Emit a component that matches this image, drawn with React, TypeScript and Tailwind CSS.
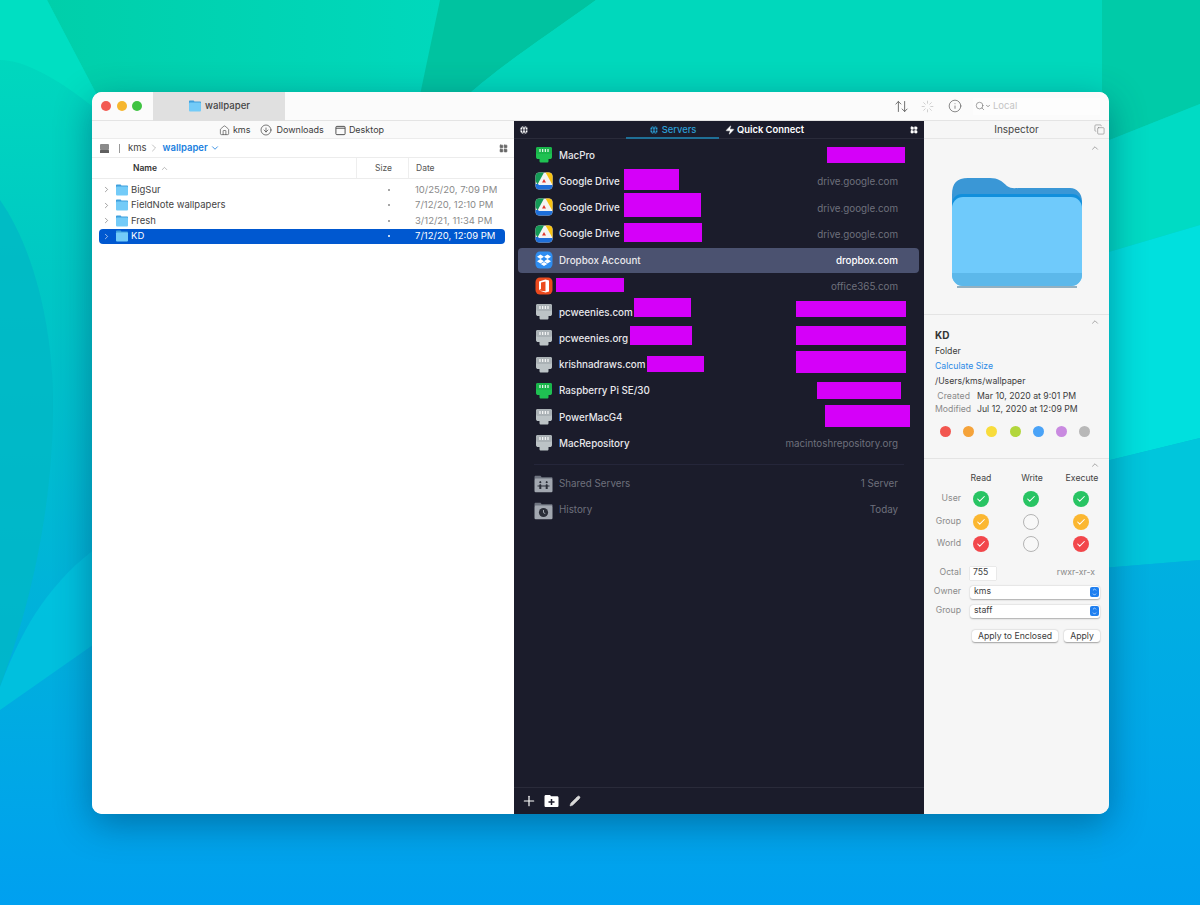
import React from 'react';
import {
  ArrowUpDown,
  ChevronDown,
  ChevronRight,
  ChevronUp,
  Check,
  CircleArrowDown,
  Copy,
  Globe,
  Home,
  Info,
  LayoutGrid,
  Loader,
  Pencil,
  Plus,
  Search,
  Zap,
} from 'lucide-react';

type Server = {
  name: string;
  host?: string;
  icon: 'green' | 'gray' | 'drive' | 'dropbox' | 'office';
  bars?: string[];
  active?: boolean;
};

const servers: Server[] = [
  { name: 'MacPro', icon: 'green', bars: ['left-[313px] top-[5px] h-[16px] w-[78px]'] },
  { name: 'Google Drive', host: 'drive.google.com', icon: 'drive', bars: ['left-[110px] top-[1px] h-[21px] w-[55px]'] },
  { name: 'Google Drive', host: 'drive.google.com', icon: 'drive', bars: ['left-[110px] top-[-1px] h-[24px] w-[77px]'] },
  { name: 'Google Drive', host: 'drive.google.com', icon: 'drive', bars: ['left-[110px] top-[2px] h-[19px] w-[78px]'] },
  { name: 'Dropbox Account', host: 'dropbox.com', icon: 'dropbox', active: true },
  { name: '', host: 'office365.com', icon: 'office', bars: ['left-[42px] top-[5px] h-[14px] w-[68px]'] },
  { name: 'pcweenies.com', icon: 'gray', bars: ['left-[120px] top-[-1px] h-[19px] w-[57px]', 'left-[282px] top-[2px] h-[16px] w-[110px]'] },
  { name: 'pcweenies.org', icon: 'gray', bars: ['left-[116px] top-[1px] h-[19px] w-[62px]', 'left-[282px] top-[1px] h-[19px] w-[110px]'] },
  { name: 'krishnadraws.com', icon: 'gray', bars: ['left-[133px] top-[4px] h-[16px] w-[57px]', 'left-[282px] top-[-1px] h-[22px] w-[110px]'] },
  { name: 'Raspberry Pi SE/30', icon: 'green', bars: ['left-[303px] top-[4px] h-[17px] w-[84px]'] },
  { name: 'PowerMacG4', icon: 'gray', bars: ['left-[311px] top-[1px] h-[22px] w-[85px]'] },
  { name: 'MacRepository', host: 'macintoshrepository.org', icon: 'gray' },
];

const files = [
  { name: 'BigSur', date: '10/25/20, 7:09 PM' },
  { name: 'FieldNote wallpapers', date: '7/12/20, 12:10 PM' },
  { name: 'Fresh', date: '3/12/21, 11:34 PM' },
  { name: 'KD', date: '7/12/20, 12:09 PM', selected: true },
];

const labelDots = ['bg-[#f2564f]', 'bg-[#f5a33a]', 'bg-[#f8dc3c]', 'bg-[#b2d63c]', 'bg-[#4aa3f7]', 'bg-[#c98ae0]', 'bg-[#b8b8b8]'];

const perms = [
  { who: 'User', cells: ['bg-[#28c463]', 'bg-[#28c463]', 'bg-[#28c463]'] },
  { who: 'Group', cells: ['bg-[#fbb731]', '', 'bg-[#fbb731]'] },
  { who: 'World', cells: ['bg-[#f2474b]', '', 'bg-[#f2474b]'] },
];

function Wallpaper() {
  return (
    <svg className="absolute inset-0" width="1200" height="905" viewBox="0 0 1200 905">
      <defs>
        <linearGradient id="wall" x1="0" y1="0" x2="0" y2="1">
          <stop offset="0" stopColor="#00dcbc" />
          <stop offset="0.3" stopColor="#00c8c4" />
          <stop offset="0.7" stopColor="#00b0dc" />
          <stop offset="1" stopColor="#00a0f0" />
        </linearGradient>
        <linearGradient id="wedge" x1="0" y1="0" x2="1" y2="0">
          <stop offset="0" stopColor="#00cfaa" />
          <stop offset="1" stopColor="#00d8bc" />
        </linearGradient>
        <linearGradient id="band" x1="0" y1="0" x2="0" y2="1">
          <stop offset="0" stopColor="#00b0e0" />
          <stop offset="1" stopColor="#00a0f0" />
        </linearGradient>
      </defs>
      <rect width="1200" height="905" fill="url(#wall)" />
      <path d="M47 0H440L420 95H97Z" fill="url(#wedge)" />
      <path d="M440 0H596C540 40 495 70 468 95H420Z" fill="#00c3a0" />
      <path d="M596 0H1102V95H468C495 70 540 40 596 0Z" fill="#00d8bc" />
      <path d="M1102 0H1200V104L1102 143Z" fill="#00cba8" />
      <path d="M1102 143L1200 104V225L1102 254Z" fill="#00dbc4" />
      <path d="M1102 254L1200 225V438L1102 462Z" fill="#00e0de" />
      <path d="M1102 462L1200 438V560L1102 568Z" fill="#00c6dc" />
      <path d="M1102 568L1200 560V905H1102Z" fill="url(#band)" />
      <path d="M0 0H47L97 95V110C60 80 25 60 0 60Z" fill="#00dfc2" />
      <path d="M0 200C35 250 53 330 53 404C53 520 25 620 0 687Z" fill="#00b8c6" opacity="0.8" />
      <path d="M0 687C25 620 53 580 100 545V640L0 710Z" fill="#00c2de" opacity="0.9" />
    </svg>
  );
}

function Folder({ className }: { className: string }) {
  return (
    <svg className={className} viewBox="0 0 14 12">
      <path d="M1 1.6C1 .9 1.4.5 2 .5h3.2c.5 0 .8.6 1.4 1H12c.6 0 1 .4 1 1V4H1Z" fill="#3f9fdc" />
      <rect x="1" y="2.6" width="12" height="9" rx="1" fill="#73cbf8" />
    </svg>
  );
}

function BigFolder() {
  return (
    <svg className="mt-[36px] ml-[28px] h-[114px] w-[130px]" viewBox="0 0 130 114">
      <path d="M5 112H125" stroke="#7a9fb4" strokeWidth="2" opacity="0.8" />
      <path d="M0 20C0 8 5 3 16 3H38C46 3 50 6 55 11C59 14 62 13 70 13H118C125 13 130 19 130 26V60H0Z" fill="#3a97d6" />
      <path d="M0 30C0 23 4 19 10 19H120C126 19 130 23 130 30V38H0Z" fill="#118fdc" />
      <rect x="0" y="22" width="130" height="89" rx="11" fill="#6fcafb" />
      <path d="M0 98H130V100A11 11 0 0 1 119 111H11A11 11 0 0 1 0 100Z" fill="#5cb8ea" />
    </svg>
  );
}

function ServerIcon({ kind }: { kind: Server['icon'] }) {
  if (kind === 'green' || kind === 'gray') {
    const body = kind === 'green' ? '#1fc152' : '#bcc3c6';
    const top = kind === 'green' ? '#19b54a' : '#aab1b5';
    return (
      <svg className="h-[18px] w-[18px]" viewBox="0 0 18 18">
        <path d="M1 3C1 1.5 2 1 3 1H15C16 1 17 1.5 17 3V11C17 12.5 16 13 15 13H13.5V15C13.5 16 13 16.5 12 16.5H6C5 16.5 4.5 16 4.5 15V13H3C2 13 1 12.5 1 11Z" fill={body} />
        <rect x="1" y="1" width="16" height="7" rx="2" fill={top} />
        <path d="M5 3V6M7.7 3V6M10.3 3V6M13 3V6" stroke="#fff" strokeWidth="1.1" />
      </svg>
    );
  }
  if (kind === 'drive') {
    return (
      <svg className="h-[18px] w-[18px]" viewBox="0 0 18 18">
        <rect x="0.5" y="0.5" width="17" height="17" rx="4" fill="#f4f4f4" />
        <path d="M4.5.5H9L2.5 12.5L.5 9V4.5C.5 2 2 .5 4.5.5Z" fill="#159a56" />
        <path d="M10.5.5H13.5C16 .5 17.5 2 17.5 4.5V13L12 3Z" fill="#f9c312" />
        <path d="M.5 12H4L3 13H17.5C17.5 16 16 17.5 13.5 17.5H4.5C2 17.5.5 16 .5 13Z" fill="#1e6fd9" />
        <path d="M9 7L11 10.5H7Z" fill="#e1362c" />
      </svg>
    );
  }
  if (kind === 'dropbox') {
    return (
      <svg className="h-[18px] w-[18px]" viewBox="0 0 18 18">
        <rect x="0.5" y="0.5" width="17" height="17" rx="4.5" fill="#2f8df0" />
        <path d="M5.5 3.5L9 5.8 5.5 8 2 5.8ZM12.5 3.5L16 5.8 12.5 8 9 5.8ZM5.5 8L9 10.2 5.5 12.5 2 10.2ZM12.5 8L16 10.2 12.5 12.5 9 10.2ZM5.7 13L9 11 12.3 13 9 15Z" fill="#fff" />
      </svg>
    );
  }
  return (
    <svg className="h-[18px] w-[18px]" viewBox="0 0 18 18">
      <rect x="0.5" y="0.5" width="17" height="17" rx="4.5" fill="#ec4a1e" />
      <path d="M4 4.5L10.5 2.5L14 3.5V14.5L10.5 15.5L4 13.5L10.5 14.2V4.5L6 5.5V12L4 13Z" fill="#fff" />
    </svg>
  );
}

function SharedIcon({ clock }: { clock?: boolean }) {
  return (
    <svg className="h-[18px] w-[19px]" viewBox="0 0 19 18">
      <path d="M.5 2C.5 1.2 1 .8 1.7.8H6C6.7.8 7 1.4 7.6 2.2H17.5C18.2 2.2 18.5 2.6 18.5 3.4V4H.5Z" fill="#6f7480" />
      <rect x="0.5" y="3.6" width="18" height="13.6" rx="1.2" fill="#a2a7b0" />
      {clock ? (
        <>
          <circle cx="9.5" cy="10.5" r="4.6" fill="#2b2e38" />
          <path d="M9.5 8V10.7L11.3 11.6" stroke="#a2a7b0" strokeWidth="1" fill="none" />
        </>
      ) : (
        <path d="M6.3 8.2a1 1 0 1 1 .01 0ZM12.7 8.2a1 1 0 1 1 .01 0ZM5.3 14V10.2C5.3 9.5 5.6 9.2 6.3 9.2S7.3 9.5 7.3 10.2V14ZM11.7 14V10.2C11.7 9.5 12 9.2 12.7 9.2S13.7 9.5 13.7 10.2V14ZM3.5 10.6H15.5V11.4H3.5Z" fill="#2b2e38" />
      )}
    </svg>
  );
}

function FileBrowser() {
  return (
    <div className="flex w-[422px] flex-col bg-white">
      <div className="flex h-[18px] items-center justify-center border-b border-[#ececec] bg-[#fafafa] pr-[3px] pt-[1px] text-[9px] text-[#3c3c3c]">
        <Home className="h-[11px] w-[11px] text-[#444]" strokeWidth={1.4} />
        <span className="ml-[3px]">kms</span>
        <CircleArrowDown className="ml-[10px] h-[12px] w-[12px] text-[#444]" strokeWidth={1.4} />
        <span className="ml-[4px]">Downloads</span>
        <svg className="ml-[11px] h-[11px] w-[11px] text-[#444]" viewBox="0 0 12 12" fill="none" stroke="currentColor" strokeWidth="1">
          <rect x="1" y="1.5" width="10" height="9" rx="1" />
          <path d="M1 3.5H11" />
        </svg>
        <span className="ml-[3px]">Desktop</span>
      </div>
      <div className="flex h-[19px] items-center border-b border-[#ececec] pl-[7px] pr-[6px] text-[9.5px] text-[#444]">
        <svg className="h-[11px] w-[11px]" viewBox="0 0 11 11">
          <rect x="1" y="1" width="9" height="6" rx="1" fill="#8b8b8b" />
          <rect x="1" y="7" width="9" height="3" rx="0.5" fill="#5f5f5f" />
        </svg>
        <span className="ml-[9px] h-[9px] w-px bg-[#999]" />
        <span className="ml-[8px]">kms</span>
        <ChevronRight className="ml-[1px] h-[12px] w-[12px] text-[#999]" strokeWidth={1.2} />
        <span className="ml-[3px] font-semibold text-[#1a7fe0]">wallpaper</span>
        <ChevronDown className="ml-[2px] h-[10px] w-[10px] text-[#1a7fe0]" strokeWidth={2} />
        <LayoutGrid className="ml-auto h-[9px] w-[9px] fill-[#666] text-[#666]" />
      </div>
      <div className="flex h-[21px] items-center border-b border-[#ececec] text-[8.5px] text-[#555]">
        <div className="flex h-full w-[265px] items-center border-r border-[#eeeeee] pl-[41px]">
          <span className="font-semibold text-[#333]">Name</span>
          <ChevronUp className="ml-[3px] h-[9px] w-[9px] text-[#888]" strokeWidth={1.5} />
        </div>
        <div className="flex h-full w-[52px] items-center border-r border-[#eeeeee] pl-[18px]">Size</div>
        <div className="pl-[7px]">Date</div>
      </div>
      <div className="flex flex-col pt-[3px]">
        {files.map((f) => (
          <div
            key={f.name}
            className={`ml-[7px] mr-[9px] flex h-[15.5px] items-center rounded-[4px] text-[9.5px] ${f.selected ? 'bg-[#0058d0] text-white' : 'text-[#444]'}`}
          >
            <ChevronRight className={`ml-[3px] h-[9px] w-[9px] ${f.selected ? 'text-white' : 'text-[#666]'}`} strokeWidth={1.6} />
            <Folder className="ml-[4px] h-[12px] w-[14px]" />
            <span className="ml-[2px] w-[257px]">{f.name}</span>
            <span className={`h-[2px] w-[2px] rounded-full ${f.selected ? 'bg-white' : 'bg-[#888]'}`} />
            <span className={`ml-[25px] whitespace-nowrap ${f.selected ? '' : 'text-[#8a8a8a]'}`}>{f.date}</span>
          </div>
        ))}
      </div>
    </div>
  );
}

function ServerList() {
  return (
    <div className="flex w-[410px] flex-col bg-[#1b1c2b] font-medium">
      <div className="flex h-[18px] items-center border-b border-[#2a2b3a] text-[9.4px]">
        <Globe className="ml-[5px] h-[10px] w-[10px] fill-white text-[#1b1c2b]" strokeWidth={2} />
        <div className="ml-[97px] flex h-[18px] w-[93px] items-center justify-center border-b-2 border-[#1f6f96] pt-[3px] text-[#2c9fd6]">
          <Globe className="mr-[3px] h-[10px] w-[10px] fill-[#2c9fd6] text-[#1b1c2b]" strokeWidth={2} />
          Servers
        </div>
        <div className="ml-[6px] flex items-center pt-[2px] font-semibold text-white">
          <Zap className="mr-[2px] h-[10px] w-[10px] fill-white" strokeWidth={1} />
          Quick Connect
        </div>
        <LayoutGrid className="ml-auto mr-[6px] h-[8px] w-[8px] fill-white text-white" />
      </div>
      <div className="flex flex-col pt-[3px] text-[9.8px]">
        {servers.map((s, i) => (
          <div key={i} className="relative flex h-[26.2px] items-center">
            {s.active && <div className="absolute left-[4px] right-[5px] top-[1px] h-[25px] rounded-[4px] bg-[#4b5270]" />}
            <div className="relative ml-[21px] flex items-center">
              <ServerIcon kind={s.icon} />
              <span className="ml-[6px] mt-[2px] text-[#e8e8ec]">{s.name}</span>
            </div>
            {s.host && (
              <span className={`relative ml-auto mr-[26px] mt-[3px] ${s.active ? 'text-white' : 'font-normal text-[#6e707c]'}`}>{s.host}</span>
            )}
            {s.bars?.map((b) => (
              <div key={b} className={`absolute bg-[#d500f9] ${b}`} />
            ))}
          </div>
        ))}
      </div>
      <div className="mx-[20px] mt-[8px] border-t border-[#25263a]" />
      <div className="flex flex-col pt-[6px] text-[9.8px] font-normal text-[#6e707c]">
        <div className="flex h-[26.2px] items-center pl-[20px] pr-[26px]">
          <SharedIcon />
          <span className="ml-[6px]">Shared Servers</span>
          <span className="ml-auto">1 Server</span>
        </div>
        <div className="flex h-[26.2px] items-center pl-[20px] pr-[26px]">
          <SharedIcon clock />
          <span className="ml-[6px]">History</span>
          <span className="ml-auto">Today</span>
        </div>
      </div>
      <div className="mt-auto flex h-[27px] items-center border-t border-[#2a2b3a] pl-[7px]">
        <Plus className="h-[16px] w-[16px] text-white" strokeWidth={1.8} />
        <svg className="ml-[7px] h-[14px] w-[15px]" viewBox="0 0 15 14">
          <path d="M.5 2.5C.5 1.5 1 1 2 1H5.5C6.2 1 6.5 1.6 7 2.2H13C14 2.2 14.5 2.7 14.5 3.7V11.5C14.5 12.5 14 13 13 13H2C1 13 .5 12.5.5 11.5Z" fill="#fff" />
          <path d="M7.5 5V11M4.5 8H10.5" stroke="#1b1c2b" strokeWidth="1.5" />
        </svg>
        <Pencil className="ml-[10px] h-[12px] w-[12px] fill-[#d8d8d8] text-[#d8d8d8]" strokeWidth={1} />
      </div>
    </div>
  );
}

function Inspector() {
  return (
    <div className="flex flex-1 flex-col bg-[#f6f6f6] text-[8.7px] text-[#3c3c3c]">
      <div className="relative flex h-[18px] items-center justify-center border-b border-[#e6e6e6] text-[10px] text-[#444]">
        Inspector
        <Copy className="absolute right-[4px] top-[3px] h-[11px] w-[11px] text-[#777]" strokeWidth={1.2} />
      </div>
      <div className="relative h-[176px] border-b border-[#e4e4e4]">
        <ChevronUp className="absolute right-[9px] top-[4px] h-[10px] w-[10px] text-[#777]" strokeWidth={1.5} />
        <BigFolder />
      </div>
      <div className="relative h-[144px] border-b border-[#e4e4e4] pl-[11px] pt-[13px]">
        <ChevronUp className="absolute right-[9px] top-[2px] h-[10px] w-[10px] text-[#777]" strokeWidth={1.5} />
        <div className="h-[14px] text-[10px] font-bold leading-[14px] text-[#333]">KD</div>
        <div className="mt-[2px] h-[15px] leading-[15px]">Folder</div>
        <div className="h-[15px] leading-[15px] text-[#2b8ae6]">Calculate Size</div>
        <div className="h-[15px] leading-[15px]">/Users/kms/wallpaper</div>
        <div className="mt-[1px] flex h-[13px] items-center">
          <span className="w-[35px] text-right text-[#8a8a8a]">Created</span>
          <span className="ml-[7px]">Mar 10, 2020 at 9:01 PM</span>
        </div>
        <div className="flex h-[13px] items-center">
          <span className="w-[35px] text-right text-[#8a8a8a]">Modified</span>
          <span className="ml-[7px]">Jul 12, 2020 at 12:09 PM</span>
        </div>
        <div className="mt-[10px] flex gap-[12.2px] pl-[5px]">
          {labelDots.map((c) => (
            <span key={c} className={`h-[11px] w-[11px] rounded-full ${c}`} />
          ))}
        </div>
      </div>
      <div className="relative pt-[14px]">
        <ChevronUp className="absolute right-[9px] top-[1px] h-[10px] w-[10px] text-[#777]" strokeWidth={1.5} />
        <div className="flex h-[12px] items-center pl-[31px] text-[#444]">
          <span className="w-[52px] text-center">Read</span>
          <span className="w-[50px] text-center">Write</span>
          <span className="w-[50px] text-center">Execute</span>
        </div>
        <div className="mt-[6px] flex flex-col gap-[6.5px]">
          {perms.map((p) => (
            <div key={p.who} className="flex h-[16px] items-center">
              <span className="w-[37px] text-right text-[#8a8a8a]">{p.who}</span>
              <div className="ml-[12px] flex gap-[34px]">
                {p.cells.map((c, i) =>
                  c ? (
                    <span key={i} className={`flex h-[16px] w-[16px] items-center justify-center rounded-full ${c}`}>
                      <Check className="h-[10px] w-[10px] text-white" strokeWidth={2.5} />
                    </span>
                  ) : (
                    <span key={i} className="h-[16px] w-[16px] rounded-full border border-[#b4b4b4] bg-[#f8f8f8]" />
                  ),
                )}
              </div>
            </div>
          ))}
        </div>
        <div className="mt-[14px] flex h-[14px] items-center">
          <span className="w-[37px] text-right text-[#8a8a8a]">Octal</span>
          <span className="ml-[9px] flex h-[13px] w-[26px] items-center bg-white pl-[3px] shadow-[0_0_1px_rgba(0,0,0,0.3)]">755</span>
          <span className="ml-auto mr-[14px] text-[#8a8a8a]">rwxr-xr-x</span>
        </div>
        {['kms', 'staff'].map((v, i) => (
          <div key={v} className="mt-[5px] flex h-[14px] items-center">
            <span className="w-[37px] text-right text-[#8a8a8a]">{i === 0 ? 'Owner' : 'Group'}</span>
            <div className="ml-[9px] flex h-[13px] w-[130px] items-center justify-between rounded-[3px] bg-white pl-[4px] pr-[1px] shadow-[0_0.5px_1.5px_rgba(0,0,0,0.3)]">
              {v}
              <span className="flex h-[10px] w-[9px] flex-col items-center justify-center rounded-[2px] bg-[#1f7ff0]">
                <ChevronUp className="h-[5px] w-[7px] text-white" strokeWidth={3} />
                <ChevronDown className="h-[5px] w-[7px] text-white" strokeWidth={3} />
              </span>
            </div>
          </div>
        ))}
        <div className="mt-[12px] flex pl-[48px]">
          <button className="h-[12px] w-[86px] rounded-[3px] bg-white leading-[12px] shadow-[0_0.5px_1.5px_rgba(0,0,0,0.35)]">Apply to Enclosed</button>
          <button className="ml-[6px] h-[12px] w-[36px] rounded-[3px] bg-white leading-[12px] shadow-[0_0.5px_1.5px_rgba(0,0,0,0.35)]">Apply</button>
        </div>
      </div>
    </div>
  );
}

export default function App() {
  return (
    <div className="relative h-[905px] w-[1200px] overflow-hidden font-['Inter','Noto_Sans',sans-serif]">
      <Wallpaper />
      <div className="relative pl-[92px] pt-[92px]">
        <div className="flex h-[722px] w-[1017px] flex-col overflow-hidden rounded-[10px] bg-white shadow-[0_10px_36px_rgba(0,50,90,0.45)]">
          <div className="flex h-[29px] items-center border-b border-[#e4e4e4] bg-[#fbfbfb]">
            <div className="ml-[9px] flex gap-[5.5px]">
              <span className="h-[10px] w-[10px] rounded-full bg-[#f25a52]" />
              <span className="h-[10px] w-[10px] rounded-full bg-[#f6b62e]" />
              <span className="h-[10px] w-[10px] rounded-full bg-[#3fc342]" />
            </div>
            <div className="ml-[11px] flex h-[29px] w-[132px] items-center justify-center bg-[#e0e0e0] text-[9.6px] font-medium text-[#444]">
              <Folder className="mr-[3px] h-[12px] w-[14px]" />
              wallpaper
            </div>
            <div className="ml-auto flex items-center pr-[9px] text-[#666]">
              <ArrowUpDown className="h-[15px] w-[15px]" strokeWidth={1.5} />
              <Loader className="ml-[12px] h-[13px] w-[13px] text-[#c8c8c8]" strokeWidth={1.6} />
              <Info className="ml-[14px] h-[14px] w-[14px]" strokeWidth={1.3} />
              <div className="ml-[11px] flex h-[17px] w-[127px] items-center bg-[#fdfdfd] pl-[2px] text-[9.5px] text-[#c4c4c4]">
                <Search className="h-[10px] w-[10px] text-[#777]" strokeWidth={1.6} />
                <ChevronDown className="h-[6px] w-[6px] text-[#777]" strokeWidth={3} />
                <span className="ml-[2px]">Local</span>
              </div>
            </div>
          </div>
          <div className="flex flex-1">
            <FileBrowser />
            <ServerList />
            <Inspector />
          </div>
        </div>
      </div>
    </div>
  );
}
